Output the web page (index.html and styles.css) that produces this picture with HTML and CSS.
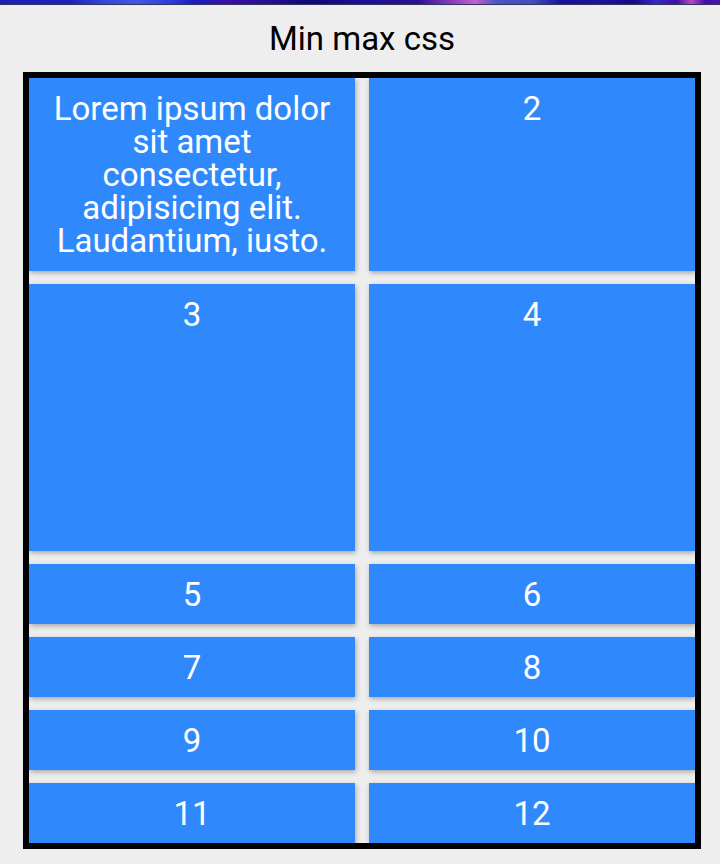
FILE: index.html
```html
<!DOCTYPE html>
<html lang="en">
<head>
<meta charset="utf-8">
<meta name="viewport" content="width=device-width, initial-scale=1">
<title>Min max css</title>
<link rel="stylesheet" href="styles.css">
</head>
<body>
<div class="banner"></div>
<main class="page">
<h1 class="title">Min max css</h1>
<div class="grid">
<div class="item">Lorem ipsum dolor sit amet consectetur, adipisicing elit. Laudantium, iusto.</div>
<div class="item">2</div>
<div class="item">3</div>
<div class="item">4</div>
<div class="item">5</div>
<div class="item">6</div>
<div class="item">7</div>
<div class="item">8</div>
<div class="item">9</div>
<div class="item">10</div>
<div class="item">11</div>
<div class="item">12</div>
</div>
</main>
</body>
</html>
```
FILE: styles.css
```css
* {
  box-sizing: border-box;
}

body {
  margin: 0;
  background: #eee;
  color: #000;
  font-family: Roboto, sans-serif;
}

.banner {
  height: 5px;
  border-bottom: 1px solid #34345f;
  background: linear-gradient(90deg, #1a20b4, #1c24bc 10%, #3344d8 14%, #3e58e0 19%, #2c3cdc 24%, #1a1cc0 27%, #3a10a8 31%, #2a1090 37%, #0c0a74 43%, #1c1090 50%, #2c1090 58%, #6a2cae 61%, #c060c8 66%, #4858c0 69%, #4050b8 74%, #18109c 78%, #1c1498 83%, #140c84 88%, #3428c4 91%, #4010a0 94%, #b848c0 96%, #4010a4 98%, #4814b0);
}

.page {
  padding: 17px 19px 14px 23px;
}

.title {
  margin: 0 0 17px;
  font-size: 33px;
  font-weight: 400;
  line-height: 33px;
  text-align: center;
}

.grid {
  display: grid;
  grid-template-columns: repeat(2, 1fr);
  grid-template-rows: minmax(193px, auto) 267px;
  gap: 13px 14px;
  border: 6px solid #000;
}

.item {
  padding: 14px 13px 13px;
  background: #2f89fc;
  box-shadow: 1px 2px 5px rgba(0, 0, 0, 0.3);
  color: #fff;
  font-size: 33px;
  line-height: 33px;
  text-align: center;
}
```
